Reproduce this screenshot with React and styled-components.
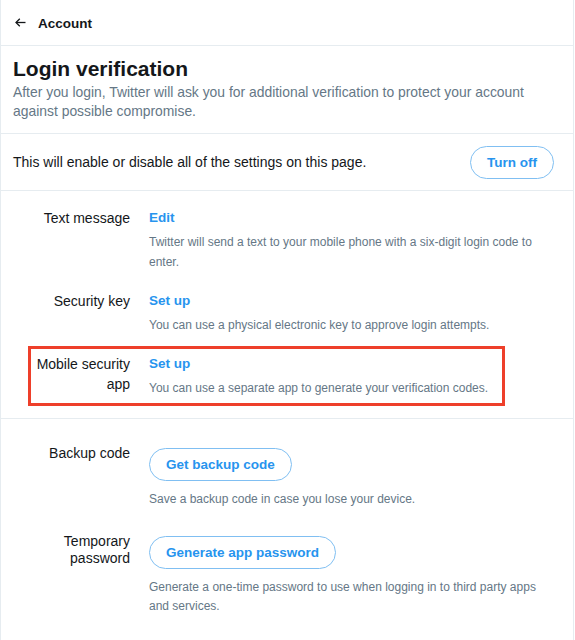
import React from 'react'
import styled, { createGlobalStyle } from 'styled-components'

const GlobalStyle = createGlobalStyle`
    body {
        margin: 0;
        background: #ffffff;
        font-family: "Liberation Sans", Arial, sans-serif;
        color: #14171a;
    }
`

const methods = [
    {
        label: 'Text message',
        action: 'Edit',
        desc: 'Twitter will send a text to your mobile phone with a six-digit login code to enter.',
    },
    {
        label: 'Security key',
        action: 'Set up',
        desc: 'You can use a physical electronic key to approve login attempts.',
    },
    {
        label: 'Mobile security app',
        action: 'Set up',
        desc: 'You can use a separate app to generate your verification codes.',
        highlight: true,
    },
]

const extras = [
    {
        label: 'Backup code',
        button: 'Get backup code',
        desc: 'Save a backup code in case you lose your device.',
    },
    {
        label: 'Temporary password',
        button: 'Generate app password',
        desc: 'Generate a one-time password to use when logging in to third party apps and services.',
    },
]

const BackArrow = () => (
    <svg width="11" height="9" viewBox="0 0 11 9" fill="none" stroke="#14171a" strokeWidth="1.3">
        <path d="M10.5 4.5H1" />
        <path d="M4.8 0.8L1 4.5l3.8 3.7" />
    </svg>
)

export default function App() {
    return (
        <Panel>
            <GlobalStyle />
            <Header>
                <BackArrow />
                <HeaderTitle>Account</HeaderTitle>
            </Header>

            <TitleBlock>
                <Title>Login verification</Title>
                <Subtitle>
                    After you login, Twitter will ask you for additional verification to protect your account
                    against possible compromise.
                </Subtitle>
            </TitleBlock>

            <ToggleRow>
                <ToggleText>This will enable or disable all of the settings on this page.</ToggleText>
                <OutlineButton>Turn off</OutlineButton>
            </ToggleRow>

            {/* verification methods */}
            <Section $top={17} $bottom={20} $gap={19}>
                {methods.map((m, i) => (
                    <Row key={i} $highlight={m.highlight}>
                        <Label>{m.label}</Label>
                        <Content>
                            <ActionLink>{m.action}</ActionLink>
                            <Desc>{m.desc}</Desc>
                        </Content>
                    </Row>
                ))}
            </Section>

            {/* backup options */}
            <Section $top={26} $bottom={20} $gap={24}>
                {extras.map((e, i) => (
                    <Row key={i}>
                        <Label $lh={17}>{e.label}</Label>
                        <Content>
                            <OutlineButton $inline>{e.button}</OutlineButton>
                            <Desc $gap={9} $lh={19}>{e.desc}</Desc>
                        </Content>
                    </Row>
                ))}
            </Section>
        </Panel>
    )
}

// Styled Components
const Panel = styled.div`
    width: 572px;
    min-height: 100vh;
    border-left: 1px solid #e6ecf0;
    border-right: 1px solid #e6ecf0;
    background: #ffffff;
`

const Header = styled.div`
    height: 45px;
    display: flex;
    align-items: center;
    gap: 12px;
    padding: 0 14px;
    border-bottom: 1px solid #e6ecf0;
`

const HeaderTitle = styled.div`
    font-size: 13.5px;
    font-weight: bold;
    line-height: 20px;
    margin-top: 2px;
`

const TitleBlock = styled.div`
    padding: 10px 12px 12px;
    border-bottom: 1px solid #e6ecf0;
`

const Title = styled.h1`
    margin: 0;
    font-size: 21px;
    font-weight: bold;
    line-height: 26px;
`

const Subtitle = styled.p`
    margin: 1px 0 0;
    font-size: 13.9px;
    line-height: 19px;
    color: #657786;
`

const ToggleRow = styled.div`
    display: flex;
    align-items: center;
    justify-content: space-between;
    height: 56px;
    padding: 0 19px 0 12px;
    border-bottom: 1px solid #e6ecf0;
`

const ToggleText = styled.div`
    font-size: 14px;
    line-height: 20px;
`

const OutlineButton = styled.button`
    display: inline-flex;
    align-items: center;
    align-self: ${props => props.$inline ? 'flex-start' : 'auto'};
    height: 33px;
    margin-top: ${props => props.$inline ? '3px' : '0'};
    padding: 0 16px;
    border: 1px solid #80bff2;
    border-radius: 999px;
    background: #ffffff;
    color: #2794ee;
    font-family: "Liberation Sans", Arial, sans-serif;
    font-size: 13.5px;
    font-weight: bold;
    cursor: pointer;
`

const Section = styled.div`
    display: flex;
    flex-direction: column;
    gap: ${props => props.$gap}px;
    padding: ${props => props.$top}px 29px ${props => props.$bottom}px 35px;
    border-bottom: 1px solid #e6ecf0;

    &:last-child {
        border-bottom: none;
    }
`

const Row = styled.div`
    display: grid;
    grid-template-columns: 94px 1fr;
    column-gap: 19px;
    margin-right: ${props => props.$highlight ? '47px' : '0'};
    outline: ${props => props.$highlight ? '3px solid #ee3f2a' : 'none'};
    outline-offset: 5px;
`

const Label = styled.div`
    font-size: 14px;
    line-height: ${props => props.$lh || 20}px;
    text-align: right;
    color: #14171a;
`

const Content = styled.div`
    display: flex;
    flex-direction: column;
`

const ActionLink = styled.a`
    font-size: 13.5px;
    font-weight: bold;
    line-height: 20px;
    color: #2794ee;
    cursor: pointer;
`

const Desc = styled.div`
    margin-top: ${props => props.$gap || 4}px;
    font-size: 12px;
    line-height: ${props => props.$lh || 20}px;
    color: #657786;
`
